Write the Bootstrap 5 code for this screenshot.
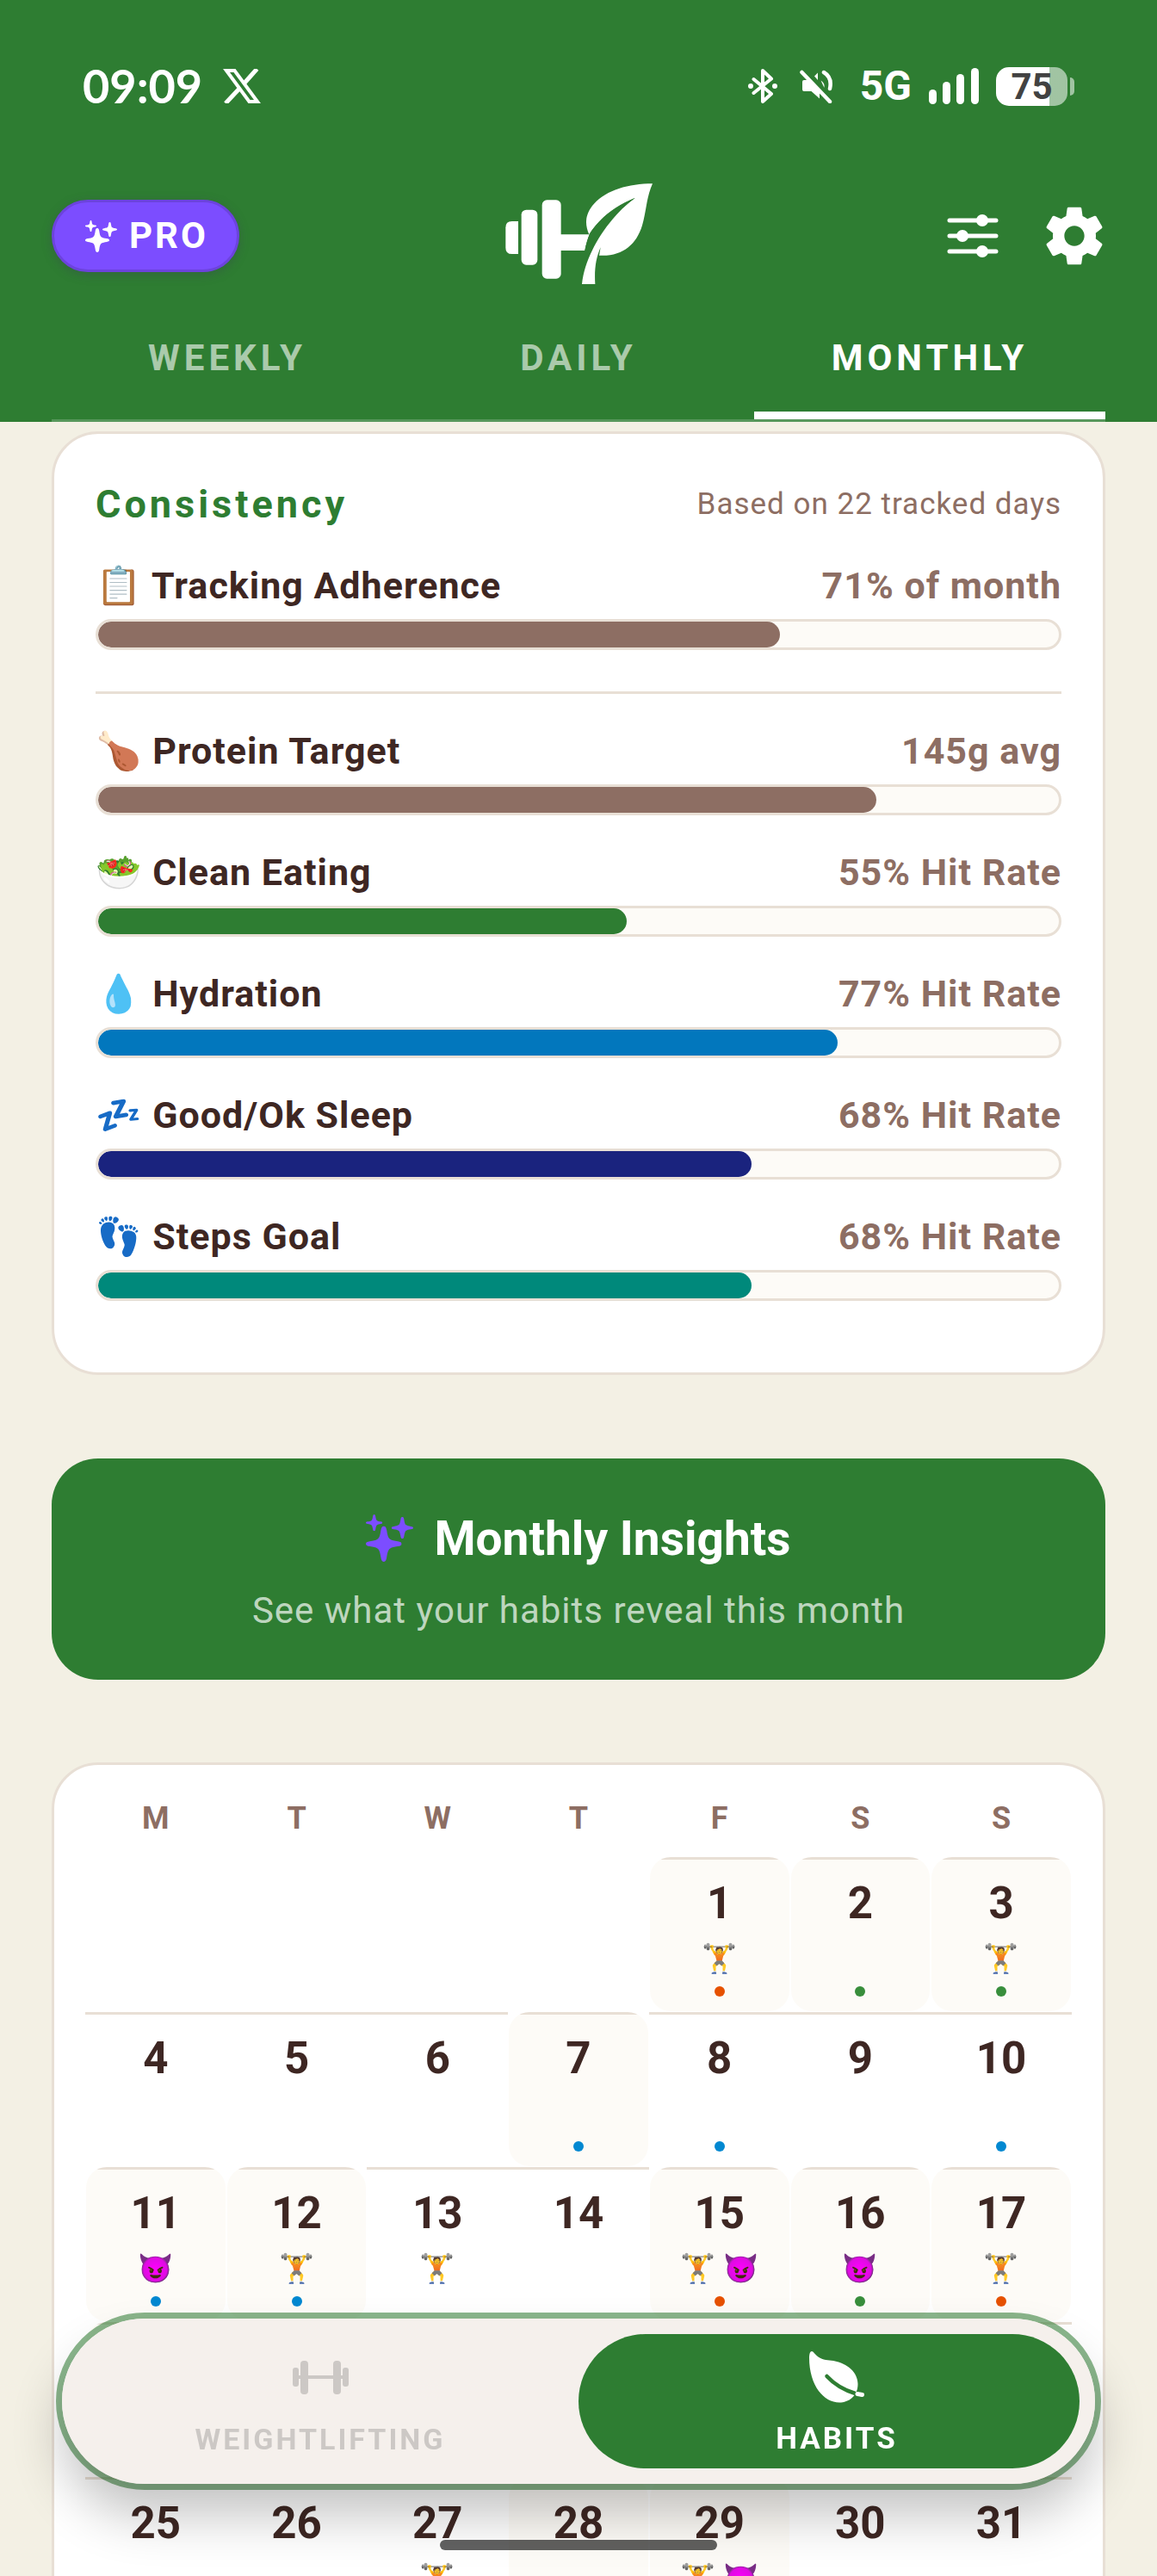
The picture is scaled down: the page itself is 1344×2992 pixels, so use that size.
<!DOCTYPE html>
<html lang="en">
<head>
    <meta charset="UTF-8">
    <meta name="viewport" content="width=device-width, initial-scale=1.0">
    <title>Habits - Monthly</title>
    <link href="https://cdn.jsdelivr.net/npm/bootstrap@5.3.0/dist/css/bootstrap.min.css" rel="stylesheet">
    <style>
        :root {
            --green: #2e7d32;
            --brown: #8d6e63;
            --ink: #3e2723;
            --line: #e8dfd5;
            --cream: #fdfbf7;
            --purple: #7c4dff;
        }
        body {
            font-family: Roboto, "Noto Color Emoji", sans-serif;
            background: #f3f0e4;
            color: var(--ink);
            height: 100vh;
            overflow: hidden;
        }
        svg { display: block; flex: none; }

        /* Header */
        .app-header { background: var(--green); color: #fff; }
        .status-bar { height: 200px; padding: 0 96px; }
        .clock { font: 700 54px/60px Lato, sans-serif; }
        .network { margin: 0 20px 0 30px; font-size: 48px; line-height: 60px; font-weight: 700; }
        .battery-level {
            width: 83px;
            height: 45px;
            margin-left: 20px;
            border-radius: 15px;
            background: linear-gradient(90deg, #fff 75%, rgba(255, 255, 255, .55) 75%);
            color: #424242;
            font-size: 42px;
            line-height: 46px;
            font-weight: 700;
        }
        .battery-tip { width: 5px; height: 21px; margin-left: 3px; border-radius: 0 5px 5px 0; background: rgba(255, 255, 255, .55); }
        .top-bar { display: grid; grid-template-columns: 1fr auto 1fr; align-items: center; height: 148px; padding: 0 60px; }
        .pro-btn {
            gap: 14px;
            height: 84px;
            padding: 0 33px 0 36px;
            border: 3px solid #6c43dd;
            border-radius: 42px;
            background: var(--purple);
            color: #fff;
            font-size: 42px;
            line-height: 48px;
            font-weight: 700;
            letter-spacing: 3px;
            box-shadow: 0 3px 12px rgba(60, 60, 90, .35);
        }
        .top-actions { gap: 52px; }
        .icon-btn { padding: 0; border: 0; background: none; color: #fff; }
        .period-tabs { margin: 0 60px; border-bottom: 3px solid rgba(255, 255, 255, .2); }
        .period-tabs .nav-link {
            padding: 44px 0 38px;
            border-bottom: 9px solid transparent;
            border-radius: 0;
            color: rgba(255, 255, 255, .6);
            font-size: 42px;
            line-height: 48px;
            font-weight: 700;
            letter-spacing: 5px;
        }
        .period-tabs .nav-link.active { color: #fff; border-color: #fff; }

        /* Cards */
        .content { padding: 11px 60px 0; }
        .panel { background: #fff; border: 3px solid var(--line); border-radius: 54px; }
        .consistency { padding: 48px 48px 47px; margin-bottom: 97px; }
        .panel-head { height: 68px; margin-bottom: 30px; }
        .panel-head h2 { font-size: 45px; line-height: 54px; font-weight: 700; letter-spacing: 4px; color: var(--green); }
        .based-on { font-size: 35px; line-height: 42px; letter-spacing: 1px; color: var(--brown); }
        .metric { margin-bottom: 36px; font-size: 43px; line-height: 60px; font-weight: 700; letter-spacing: 1px; }
        .metric-row { height: 60px; margin-bottom: 9px; }
        .metric-value { color: var(--brown); }
        .metric .progress { height: 36px; border: 3px solid var(--line); border-radius: 18px; background: var(--cream); }
        .metric .progress-bar { border-radius: 15px; }
        .divider { height: 3px; margin: 48px 0 36px; border: 0; background: var(--line); opacity: 1; }
        .fill-brown { background: var(--brown); }
        .fill-green { background: var(--green); }
        .fill-blue { background: #0277bd; }
        .fill-navy { background: #1a237e; }
        .fill-teal { background: #00897b; }

        .insights-btn { height: 257px; gap: 24px; margin-bottom: 96px; padding: 6px 0 0; border: 0; border-radius: 54px; background: var(--green); color: #fff; }
        .insights-title { font-size: 55px; line-height: 66px; font-weight: 700; }
        .insights-sub { font-size: 42px; line-height: 54px; letter-spacing: 1px; color: rgba(255, 255, 255, .7); }

        /* Calendar */
        .calendar-panel { padding: 36px 36px 60px; }
        .calendar { width: 100%; table-layout: fixed; border-collapse: collapse; text-align: center; }
        .calendar th { height: 71px; padding: 0 0 20px; font-size: 36px; line-height: 42px; font-weight: 700; color: var(--brown); }
        .calendar td { padding: 0 0 1px; vertical-align: top; }
        .day { height: 179px; padding-top: 24px; background: linear-gradient(var(--line) 3px, transparent 3px); }
        .day.tracked { margin: 0 1px; border-radius: 24px; background: linear-gradient(var(--line) 3px, var(--cream) 3px); }
        .day-number { font-size: 51px; line-height: 60px; font-weight: 700; }
        .day-marks { display: flex; justify-content: center; gap: 9px; height: 52px; margin-top: 8px; font-size: 33px; line-height: 52px; }
        .dot { width: 12px; height: 12px; margin: 6px auto 0; border-radius: 50%; }
        .dot-orange { background: #e65100; }
        .dot-green { background: #388e3c; }
        .dot-blue { background: #0288d1; }

        /* Bottom switch, floats over the calendar */
        .mode-switch { position: fixed; left: 65px; right: 65px; bottom: 100px; border: 7px solid rgba(46, 125, 50, .56); border-radius: 104px; }
        .mode-inner { padding: 18px; border-radius: 97px; background: #f5f0ec; box-shadow: 0 36px 60px rgba(0, 0, 0, .24); }
        .mode-btn {
            flex: 1 1 0;
            gap: 21px;
            height: 156px;
            padding: 6px 18px 0 0;
            border: 0;
            border-radius: 78px;
            background: none;
            color: #ccc8c5;
            font-size: 34px;
            line-height: 42px;
            font-weight: 700;
            letter-spacing: 3px;
        }
        .mode-btn.active { padding: 6px 0 0 18px; background: var(--green); color: #fff; font-size: 35px; }
        .home-bar { position: fixed; left: 38%; right: 38%; bottom: 30px; height: 12px; border-radius: 6px; background: rgba(0, 0, 0, .62); }
    </style>
</head>
<body class="d-flex flex-column">
    <!-- Shared shapes -->
    <svg width="0" height="0" class="position-absolute" aria-hidden="true">
        <symbol id="spark" viewBox="-14 -14 28 28">
            <path fill="currentColor" d="M0-14C1.500-14 2-12.500 2.300-10.500 3-6 3.600-4.600 5-3.600 6.500-2.600 8-2.400 11-1.900 13-1.500 14-1.200 14 0S13 1.500 11 1.900C8 2.400 6.500 2.600 5 3.600 3.600 4.600 3 6 2.300 10.500 2 12.500 1.500 14 0 14S-2 12.500-2.300 10.500C-3 6-3.600 4.600-5 3.600-6.500 2.600-8 2.400-11 1.900-13 1.500-14 1.200-14 0S-13-1.500-11-1.900C-8-2.400-6.500-2.600-5-3.600-3.600-4.600-3-6-2.300-10.500-2-12.500-1.500-14 0-14Z"/>
        </symbol>
        <symbol id="sparkles" viewBox="0 0 37 37">
            <use href="#spark" x="0" y="0" width="13" height="13"/>
            <use href="#spark" x="20" y="2" width="17" height="17"/>
            <use href="#spark" x="0" y="9" width="28" height="28"/>
        </symbol>
    </svg>

    <header class="app-header flex-shrink-0">
        <div class="status-bar d-flex justify-content-between align-items-center">
            <div class="d-flex align-items-center">
                <span class="clock">09:09</span>
                <svg class="ms-4" width="44" height="40" viewBox="0 0 44 40" fill="none" stroke="#fff">
                    <path stroke-width="4" d="M4 2h9.500L40 38h-9.500z"/>
                    <path stroke-width="5" d="M39.500 0 24 17.500M19 23 3 40"/>
                </svg>
            </div>
            <div class="d-flex align-items-center">
                <!-- Bluetooth -->
                <svg width="34" height="40" viewBox="0 0 34 40" fill="none" stroke="#fff" stroke-width="4" stroke-linecap="round" stroke-linejoin="round">
                    <path d="M6.500 12 27 29 17 38V2l10 9.500L6.500 28"/>
                    <path stroke-width="6" d="M3 20h.01M31 20h.01"/>
                </svg>
                <!-- Muted speaker -->
                <svg class="ms-4" width="42" height="40" viewBox="0 0 42 40">
                    <path fill="#fff" d="M7 13h6l12 13v8.500L15.500 26H7q-2 0-2-2v-9q0-2 2-2zM19 8.500l4-4v8.500zM26.500 13.500q5 3 4 8.500z"/>
                    <path fill="none" stroke="#fff" stroke-width="4.500" stroke-linecap="round" d="M4.500 4 37 38M30 4q10 6 7 19"/>
                </svg>
                <span class="network">5G</span>
                <!-- Signal -->
                <svg width="58" height="42" viewBox="0 0 58 42" fill="#fff">
                    <rect x="0" y="25" width="9" height="17" rx="4.500"/>
                    <rect x="16" y="16" width="9" height="26" rx="4.500"/>
                    <rect x="32" y="7" width="9" height="35" rx="4.500"/>
                    <rect x="49" y="0" width="9" height="42" rx="4.500"/>
                </svg>
                <span class="battery-level text-center">75</span>
                <span class="battery-tip"></span>
            </div>
        </div>

        <div class="top-bar">
            <button type="button" class="pro-btn d-flex align-items-center me-auto">
                <svg width="37" height="37"><use href="#sparkles"/></svg>PRO
            </button>
            <!-- Dumbbell and leaf logo -->
            <svg width="184" height="148" viewBox="0 0 552 444" fill="#fff" role="img" aria-label="Logo">
                <path d="M66 171v114H44Q22 285 22 263v-70q0-22 22-22z"/>
                <rect x="77" y="131" width="56" height="192" rx="17"/>
                <rect x="149" y="97" width="66" height="274" rx="17"/>
                <path d="M210 217h104q-9 22-16 56h-88z"/>
                <path d="M534 40C450 40 375 62 330 110 300 143 296 180 313 217 345 165 405 118 472 90 400 145 352 215 325 270 305 310 292 350 288 390h46c-3-50 2-90 19-128l-5 28c80 5 130-38 150-105C514 130 512 90 534 40z"/>
                <path fill="#2e7d32" d="M474 89C400 118 346 165 318 210q-13 25-20 63l14 14C340 215 400 140 474 89z"/>
            </svg>
            <div class="top-actions d-flex align-items-center justify-content-end">
                <button type="button" class="icon-btn" aria-label="Filters">
                    <svg width="60" height="50" viewBox="0 0 60 50" stroke="#fff" stroke-width="5" stroke-linecap="round" fill="#fff">
                        <path d="M3 7h54M3 25h54M3 43h54"/>
                        <g stroke="none"><circle cx="41" cy="7" r="7"/><circle cx="18" cy="25" r="7"/><circle cx="41" cy="43" r="7"/></g>
                    </svg>
                </button>
                <button type="button" class="icon-btn" aria-label="Settings">
                    <svg width="72" height="80" viewBox="1.200 0 21.600 24" fill="#fff">
                        <path d="M19.430 12.980c.04-.32.07-.64.07-.98s-.03-.66-.07-.98l2.110-1.650c.19-.15.24-.42.12-.64l-2-3.460c-.12-.22-.39-.3-.61-.22l-2.490 1c-.52-.4-1.080-.73-1.690-.98l-.38-2.650C14.460 2.180 14.250 2 14 2h-4c-.25 0-.46.18-.49.42l-.38 2.650c-.61.25-1.170.59-1.690.98l-2.490-1c-.23-.09-.49 0-.61.22l-2 3.460c-.13.22-.07.49.12.64l2.110 1.650c-.04.32-.07.65-.07.98s.03.66.07.98l-2.110 1.650c-.19.15-.24.42-.12.64l2 3.460c.12.22.39.3.61.22l2.490-1c.52.4 1.080.73 1.690.98l.38 2.650c.03.24.24.42.49.42h4c.25 0 .46-.18.49-.42l.38-2.650c.61-.25 1.170-.59 1.690-.98l2.490 1c.23.09.49 0 .61-.22l2-3.460c.12-.22.07-.49-.12-.64l-2.110-1.650zM12 15.500c-1.930 0-3.500-1.570-3.500-3.500s1.570-3.500 3.500-3.500 3.500 1.570 3.500 3.500-1.570 3.500-3.500 3.500z"/>
                    </svg>
                </button>
            </div>
        </div>

        <nav class="period-tabs nav nav-justified">
            <a class="nav-link" href="#weekly">WEEKLY</a>
            <a class="nav-link" href="#daily">DAILY</a>
            <a class="nav-link active" href="#monthly" aria-current="page">MONTHLY</a>
        </nav>
    </header>

    <main class="content flex-fill overflow-hidden">
        <!-- Consistency -->
        <section class="panel consistency">
            <div class="panel-head d-flex justify-content-between align-items-center">
                <h2 class="m-0">Consistency</h2>
                <span class="based-on">Based on 22 tracked days</span>
            </div>
            <div class="metric">
                <div class="metric-row d-flex justify-content-between"><span>📋 Tracking Adherence</span><span class="metric-value">71% of month</span></div>
                <div class="progress"><div class="progress-bar fill-brown" style="width: 71%"></div></div>
            </div>
            <hr class="divider">
            <div class="metric">
                <div class="metric-row d-flex justify-content-between"><span>🍗 Protein Target</span><span class="metric-value">145g avg</span></div>
                <div class="progress"><div class="progress-bar fill-brown" style="width: 81%"></div></div>
            </div>
            <div class="metric">
                <div class="metric-row d-flex justify-content-between"><span>🥗 Clean Eating</span><span class="metric-value">55% Hit Rate</span></div>
                <div class="progress"><div class="progress-bar fill-green" style="width: 55%"></div></div>
            </div>
            <div class="metric">
                <div class="metric-row d-flex justify-content-between"><span>💧 Hydration</span><span class="metric-value">77% Hit Rate</span></div>
                <div class="progress"><div class="progress-bar fill-blue" style="width: 77%"></div></div>
            </div>
            <div class="metric">
                <div class="metric-row d-flex justify-content-between"><span>💤 Good/Ok Sleep</span><span class="metric-value">68% Hit Rate</span></div>
                <div class="progress"><div class="progress-bar fill-navy" style="width: 68%"></div></div>
            </div>
            <div class="metric">
                <div class="metric-row d-flex justify-content-between"><span>👣 Steps Goal</span><span class="metric-value">68% Hit Rate</span></div>
                <div class="progress"><div class="progress-bar fill-teal" style="width: 68%"></div></div>
            </div>
        </section>

        <!-- Insights -->
        <button type="button" class="insights-btn w-100 d-flex flex-column align-items-center justify-content-center">
            <span class="insights-title d-flex align-items-center gap-4">
                <svg width="55" height="55" color="#7c4dff"><use href="#sparkles"/></svg>Monthly Insights
            </span>
            <span class="insights-sub">See what your habits reveal this month</span>
        </button>

        <!-- Calendar -->
        <section class="panel calendar-panel">
            <table class="calendar">
                <thead>
                    <tr><th>M</th><th>T</th><th>W</th><th>T</th><th>F</th><th>S</th><th>S</th></tr>
                </thead>
                <tbody id="calendarBody"></tbody>
            </table>
        </section>
    </main>

    <div class="mode-switch">
        <div class="mode-inner d-flex">
            <button type="button" class="mode-btn d-flex flex-column align-items-center justify-content-center">
                <svg width="65" height="60" viewBox="0 0 65 60" fill="currentColor">
                    <rect x="4" y="28" width="57" height="4"/>
                    <rect x="0" y="19" width="7" height="22" rx="3"/>
                    <rect x="9" y="11" width="9" height="39" rx="4"/>
                    <rect x="47" y="11" width="9" height="39" rx="4"/>
                    <rect x="58" y="19" width="7" height="22" rx="3"/>
                </svg>
                WEIGHTLIFTING
            </button>
            <button type="button" class="mode-btn active d-flex flex-column align-items-center justify-content-center">
                <svg width="64" height="60" viewBox="0 0 64 60">
                    <path fill="#fff" d="M3 0C5 0 6 3 10.500 6.500 16 10.500 22 10 28 11 45 14 56.500 25 56.500 38 56.500 52 46 59.500 35 59.500 17 59.500 0 40 0 7.500 0 3 1 0 3 0z"/>
                    <path fill="none" stroke="#2e7d32" stroke-width="4.500" stroke-linecap="round" d="M20.500 29q13 14 33 20"/>
                    <path fill="none" stroke="#fff" stroke-width="5" stroke-linecap="round" d="M56 49.500l5.500 1"/>
                </svg>
                HABITS
            </button>
        </div>
    </div>
    <div class="home-bar"></div>

    <script>
        const days = {
            1: { tracked: true, marks: ['🏋️'], dot: 'orange' },
            2: { tracked: true, dot: 'green' },
            3: { tracked: true, marks: ['🏋️'], dot: 'green' },
            7: { tracked: true, dot: 'blue' },
            8: { dot: 'blue' },
            10: { dot: 'blue' },
            11: { tracked: true, marks: ['😈'], dot: 'blue' },
            12: { tracked: true, marks: ['🏋️'], dot: 'blue' },
            13: { marks: ['🏋️'] },
            15: { tracked: true, marks: ['🏋️', '😈'], dot: 'orange' },
            16: { tracked: true, marks: ['😈'], dot: 'green' },
            17: { tracked: true, marks: ['🏋️'], dot: 'orange' },
            18: { tracked: true },
            27: { marks: ['🏋️'] },
            28: { tracked: true },
            29: { tracked: true, marks: ['🏋️', '😈'] }
        };
        const firstWeekday = 4;
        const body = document.getElementById('calendarBody');

        for (let week = 0; week < 5; week++) {
            const tr = document.createElement('tr');
            for (let col = 0; col < 7; col++) {
                const number = week * 7 + col - firstWeekday + 1;
                const td = document.createElement('td');
                if (number > 0) {
                    const day = days[number] || {};
                    const marks = (day.marks || []).map(m => `<span>${m}</span>`).join('');
                    td.innerHTML = `
                        <div class="day ${day.tracked ? 'tracked' : ''}">
                            <div class="day-number">${number}</div>
                            <div class="day-marks">${marks}</div>
                            ${day.dot ? `<div class="dot dot-${day.dot}"></div>` : ''}
                        </div>
                    `;
                }
                tr.appendChild(td);
            }
            body.appendChild(tr);
        }
    </script>
    <script src="https://cdn.jsdelivr.net/npm/bootstrap@5.3.0/dist/js/bootstrap.bundle.min.js"></script>
</body>
</html>
